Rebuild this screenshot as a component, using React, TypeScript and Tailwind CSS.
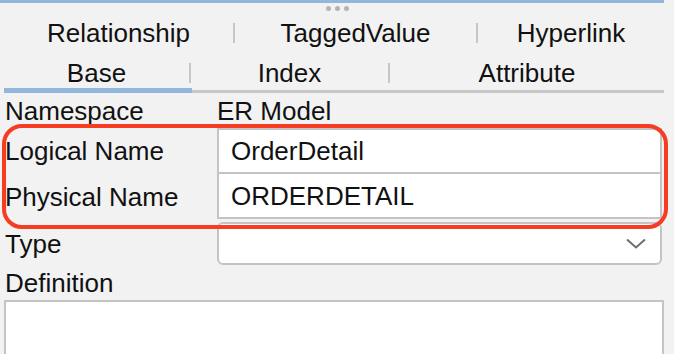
import React from "react";

const topTabs = [
  { label: "Relationship", w: "w-[229px]" },
  { label: "TaggedValue", w: "w-[241px]" },
  { label: "Hyperlink", w: "w-[186px]" },
];

const bottomTabs = [
  { label: "Base", w: "w-[185px]" },
  { label: "Index", w: "w-[197px]" },
  { label: "Attribute", w: "w-[274px]" },
];

function TabRow({ tabs }: { tabs: { label: string; w: string }[] }) {
  return (
    <div className="flex ml-[4px] h-full items-center">
      {tabs.map((t, i) => (
        <React.Fragment key={t.label}>
          {i > 0 && <div className="w-[2px] h-[20px] bg-[#c6c6c6] shrink-0" />}
          <div className={`${t.w} shrink-0 text-center leading-none`}>{t.label}</div>
        </React.Fragment>
      ))}
    </div>
  );
}

export default function App() {
  return (
    <div className="relative w-[674px] h-[354px] overflow-hidden bg-[#f2f2f2] text-[26px] text-[#111] font-['Liberation_Sans',Arial,sans-serif]">
      {/* Top accent */}
      <div className="h-[3px] w-[664px] bg-[#93b6dc]" />

      {/* Drag handle */}
      <div className="h-[10px] flex items-center justify-center gap-[4px]">
        <span className="w-[5px] h-[5px] rounded-full bg-[#b4b4b4]" />
        <span className="w-[5px] h-[5px] rounded-full bg-[#b4b4b4]" />
        <span className="w-[5px] h-[5px] rounded-full bg-[#b4b4b4]" />
      </div>

      {/* Tabs */}
      <div className="h-[39px] pt-[1px]">
        <TabRow tabs={topTabs} />
      </div>
      <div className="h-[36px] pt-[6px]">
        <TabRow tabs={bottomTabs} />
      </div>
      <div className="ml-[4px] w-[660px] h-[5px] flex items-end">
        <div className="w-[188px] h-[5px] bg-[#93b6dc]" />
        <div className="flex-1 h-[3px] bg-[#c8c8c8]" />
      </div>

      {/* Form */}
      <div className="grid grid-cols-[212px_445px] pl-[5px]">
        <div className="h-[35px] flex items-center leading-none">Namespace</div>
        <div className="h-[35px] flex items-center leading-none">ER Model</div>

        <div className="h-[46px] flex items-center leading-none">Logical Name</div>
        <div className="h-[46px] flex items-center leading-none bg-white border-2 border-[#c4c4c4] pl-[12px]">
          OrderDetail
        </div>

        <div className="h-[45px] flex items-center leading-none">Physical Name</div>
        <div className="h-[45px] flex items-center leading-none bg-white border-2 border-t-0 border-[#c4c4c4] pl-[12px]">
          ORDERDETAIL
        </div>

        <div className="h-[46px] pt-[3px] flex items-center leading-none">Type</div>
        <div className="h-[46px] pt-[3px]">
          <div className="h-[43px] bg-white border-2 border-[#c4c4c4] rounded-[6px] flex items-center justify-end pr-[14px]">
            <svg width="20" height="11" viewBox="0 0 20 11" fill="none">
              <path d="M1 1.5 L10 9.5 L19 1.5" stroke="#6e6e6e" strokeWidth="2" />
            </svg>
          </div>
        </div>

        <div className="h-[35px] col-span-2 flex items-center leading-none">Definition</div>
      </div>
      <div className="ml-[4px] w-[660px] h-[80px] bg-white border-2 border-[#c4c4c4]" />

      {/* Highlight annotation */}
      <div className="absolute left-[2px] top-[124px] w-[666px] h-[105px] border-[4px] border-[#f63c22] rounded-[20px] pointer-events-none" />
    </div>
  );
}
